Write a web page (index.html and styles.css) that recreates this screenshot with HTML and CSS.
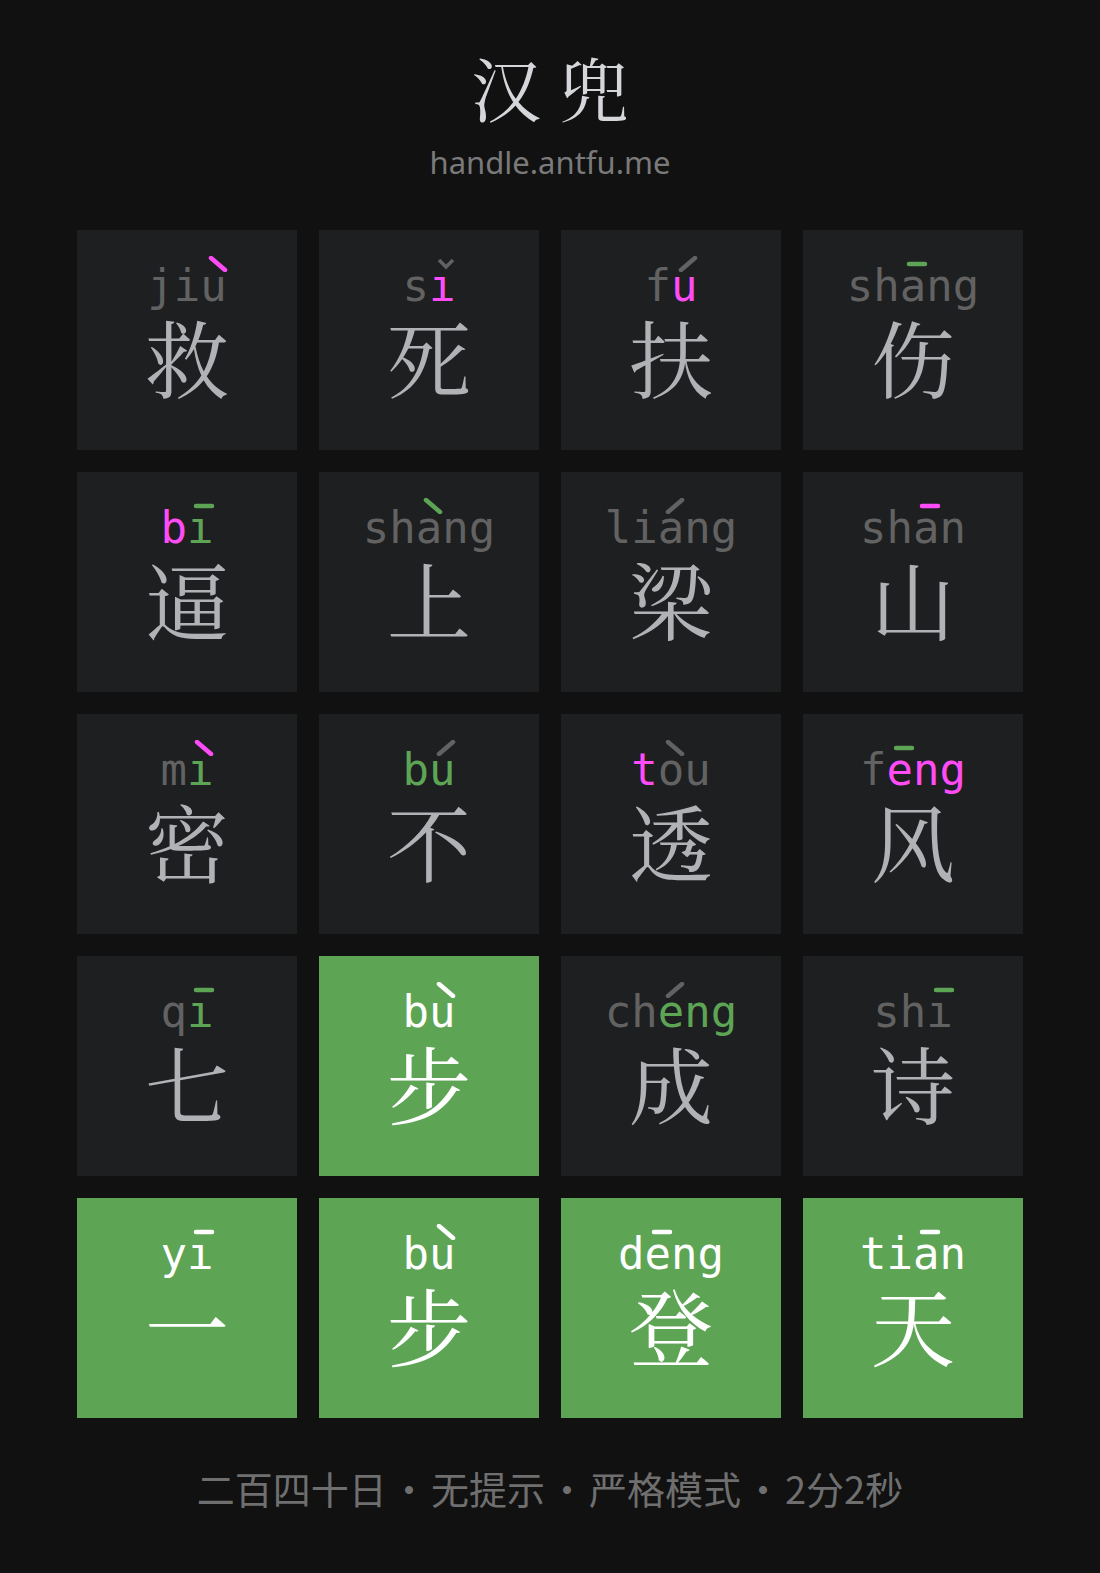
FILE: index.html
```html
<!DOCTYPE html>
<html lang="zh">
<head>
<meta charset="utf-8">
<title>汉兜</title>
<link rel="stylesheet" href="styles.css">
</head>
<body>
<svg width="0" height="0" class="defs">
  <defs>
    <symbol id="t1" viewBox="0 0 22 16"><line x1="3" y1="8" x2="19" y2="8"/></symbol>
    <symbol id="t2" viewBox="0 0 22 16"><line x1="4" y1="14" x2="18" y2="2"/></symbol>
    <symbol id="t3" viewBox="0 0 22 16"><polyline class="caron" points="4,4 11,11 18,4"/></symbol>
    <symbol id="t4" viewBox="0 0 22 16"><line x1="4" y1="2" x2="18" y2="14"/></symbol>
  </defs>
</svg>
<main class="page">
  <header class="head">
    <h1 class="title">汉兜</h1>
    <div class="site">handle.antfu.me</div>
  </header>

  <section class="board">
    <!-- row 1 -->
    <div class="tile">
      <div class="py"><span class="l">j</span><span class="l">i</span><span class="l">u<svg class="tone mis"><use href="#t4"/></svg></span></div>
      <div class="hz">救</div>
    </div>
    <div class="tile">
      <div class="py"><span class="l">s</span><span class="l mis">ı<svg class="tone gray"><use href="#t3"/></svg></span></div>
      <div class="hz">死</div>
    </div>
    <div class="tile">
      <div class="py"><span class="l">f</span><span class="l mis">u<svg class="tone gray"><use href="#t2"/></svg></span></div>
      <div class="hz">扶</div>
    </div>
    <div class="tile">
      <div class="py"><span class="l">s</span><span class="l">h</span><span class="l">a<svg class="tone ok"><use href="#t1"/></svg></span><span class="l">n</span><span class="l">g</span></div>
      <div class="hz">伤</div>
    </div>

    <!-- row 2 -->
    <div class="tile">
      <div class="py"><span class="l mis">b</span><span class="l ok">ı<svg class="tone ok"><use href="#t1"/></svg></span></div>
      <div class="hz">逼</div>
    </div>
    <div class="tile">
      <div class="py"><span class="l">s</span><span class="l">h</span><span class="l">a<svg class="tone ok"><use href="#t4"/></svg></span><span class="l">n</span><span class="l">g</span></div>
      <div class="hz">上</div>
    </div>
    <div class="tile">
      <div class="py"><span class="l">l</span><span class="l">i</span><span class="l">a<svg class="tone gray"><use href="#t2"/></svg></span><span class="l">n</span><span class="l">g</span></div>
      <div class="hz">梁</div>
    </div>
    <div class="tile">
      <div class="py"><span class="l">s</span><span class="l">h</span><span class="l">a<svg class="tone mis"><use href="#t1"/></svg></span><span class="l">n</span></div>
      <div class="hz">山</div>
    </div>

    <!-- row 3 -->
    <div class="tile">
      <div class="py"><span class="l">m</span><span class="l ok">ı<svg class="tone mis"><use href="#t4"/></svg></span></div>
      <div class="hz">密</div>
    </div>
    <div class="tile">
      <div class="py"><span class="l ok">b</span><span class="l ok">u<svg class="tone gray"><use href="#t2"/></svg></span></div>
      <div class="hz">不</div>
    </div>
    <div class="tile">
      <div class="py"><span class="l mis">t</span><span class="l">o<svg class="tone gray"><use href="#t4"/></svg></span><span class="l">u</span></div>
      <div class="hz">透</div>
    </div>
    <div class="tile">
      <div class="py"><span class="l">f</span><span class="l mis">e<svg class="tone ok"><use href="#t1"/></svg></span><span class="l mis">n</span><span class="l mis">g</span></div>
      <div class="hz">风</div>
    </div>

    <!-- row 4 -->
    <div class="tile">
      <div class="py"><span class="l">q</span><span class="l ok">ı<svg class="tone ok"><use href="#t1"/></svg></span></div>
      <div class="hz">七</div>
    </div>
    <div class="tile good">
      <div class="py"><span class="l">b</span><span class="l">u<svg class="tone"><use href="#t4"/></svg></span></div>
      <div class="hz">步</div>
    </div>
    <div class="tile">
      <div class="py"><span class="l">c</span><span class="l">h</span><span class="l ok">e<svg class="tone gray"><use href="#t2"/></svg></span><span class="l ok">n</span><span class="l ok">g</span></div>
      <div class="hz">成</div>
    </div>
    <div class="tile">
      <div class="py"><span class="l">s</span><span class="l">h</span><span class="l">ı<svg class="tone ok"><use href="#t1"/></svg></span></div>
      <div class="hz">诗</div>
    </div>

    <!-- row 5 -->
    <div class="tile good">
      <div class="py"><span class="l">y</span><span class="l">ı<svg class="tone"><use href="#t1"/></svg></span></div>
      <div class="hz">一</div>
    </div>
    <div class="tile good">
      <div class="py"><span class="l">b</span><span class="l">u<svg class="tone"><use href="#t4"/></svg></span></div>
      <div class="hz">步</div>
    </div>
    <div class="tile good">
      <div class="py"><span class="l">d</span><span class="l">e<svg class="tone"><use href="#t1"/></svg></span><span class="l">n</span><span class="l">g</span></div>
      <div class="hz">登</div>
    </div>
    <div class="tile good">
      <div class="py"><span class="l">t</span><span class="l">i</span><span class="l">a<svg class="tone"><use href="#t1"/></svg></span><span class="l">n</span></div>
      <div class="hz">天</div>
    </div>
  </section>

  <footer class="foot">
    <span>二百四十日</span><span class="dot">·</span><span>无提示</span><span class="dot">·</span><span>严格模式</span><span class="dot">·</span><span>2分2秒</span>
  </footer>
</main>
</body>
</html>
```

FILE: styles.css
```css
html, body {
  margin: 0;
  padding: 0;
  background: #111111;
}

.defs {
  position: absolute;
  width: 0;
  height: 0;
}

.page {
  display: flex;
  flex-direction: column;
  align-items: center;
  min-height: 1573px;
}

.head {
  display: flex;
  flex-direction: column;
  align-items: center;
  padding-top: 42px;
}

.title {
  margin: 0;
  font-family: "Noto Serif CJK SC", "Source Han Serif SC", "Noto Sans CJK SC", serif;
  font-weight: 400;
  font-size: 70px;
  line-height: 90px;
  letter-spacing: 18px;
  padding-left: 18px;
  color: #d4d6da;
}

.site {
  margin-top: 10px;
  font-family: "Noto Sans", "Open Sans", sans-serif;
  font-size: 31px;
  line-height: 40px;
  color: #7a7a7a;
}

.board {
  margin-top: 48px;
  display: grid;
  grid-template-columns: repeat(4, 220px);
  grid-auto-rows: 220px;
  gap: 22px;
}

.tile {
  background: #1e1f21;
  display: flex;
  flex-direction: column;
  align-items: center;
  padding-top: 34px;
  box-sizing: border-box;
  color: #626262;
}

.tile.good {
  background: #5da555;
  color: #ffffff;
}

.py {
  display: flex;
  font-family: "DejaVu Sans Mono", "Liberation Mono", monospace;
  font-size: 44px;
  line-height: 44px;
  height: 44px;
}

.l {
  position: relative;
  display: inline-block;
}

.tone {
  position: absolute;
  left: 50%;
  top: -8px;
  width: 22px;
  height: 16px;
  margin-left: -7px;
  fill: none;
  stroke: currentColor;
  stroke-width: 4.5;
  stroke-linecap: round;
  overflow: visible;
}

.caron {
  stroke-width: 3.5;
  stroke-linecap: butt;
}

.tone.gray {
  color: #626262;
}

.good .tone {
  color: #ffffff;
}

.mis {
  color: #ff4cf6;
}

.ok {
  color: #5da555;
}

.hz {
  margin-top: 6px;
  font-family: "Noto Serif CJK SC", "Source Han Serif SC", "Noto Sans CJK SC", serif;
  font-size: 84px;
  line-height: 84px;
  color: #b0b2b6;
}

.good .hz {
  color: #ffffff;
}

.foot {
  margin-top: 44px;
  display: flex;
  align-items: center;
  font-family: "Noto Sans CJK SC", "Noto Sans", sans-serif;
  font-size: 38px;
  line-height: 52px;
  color: #6f6f6f;
}

.dot {
  padding: 0 3px;
}
```
